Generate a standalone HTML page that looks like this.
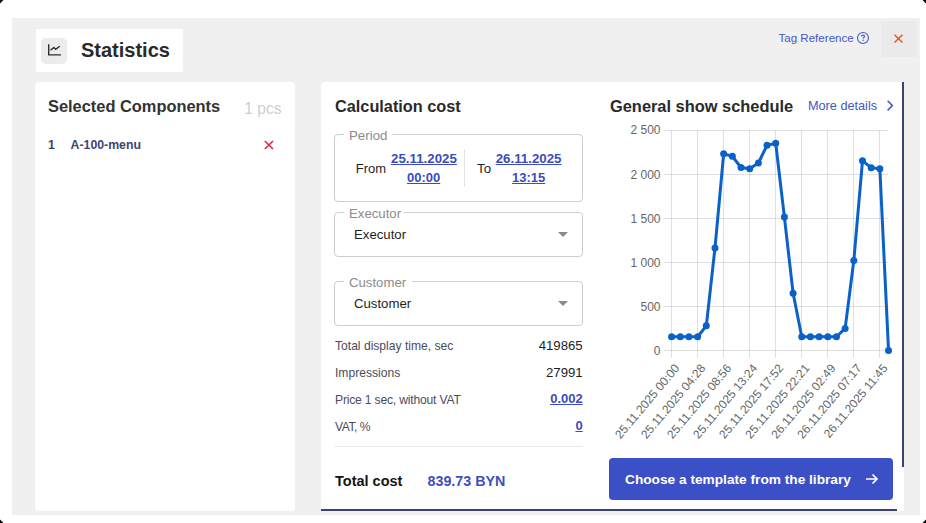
<!DOCTYPE html>
<html><head><meta charset="utf-8"><style>
html,body{margin:0;padding:0;width:926px;height:523px;overflow:hidden;background:#fff;font-family:"Liberation Sans",sans-serif;position:relative}
.abs{position:absolute}
.t{position:absolute;white-space:nowrap}
.corner{position:absolute;width:0;height:0;border-style:solid}
</style></head><body>
<svg class="abs" style="left:0;top:0" width="926" height="523" viewBox="0 0 926 523"><path d="M0 0H3.5L0 3.5Z" fill="#000"/><path d="M926 0H922.5L926 3.5Z" fill="#000"/><path d="M0 523H3.5L0 519.5Z" fill="#000"/><path d="M926 523H922.5L926 519.5Z" fill="#000"/></svg><div class="abs" style="left:12px;top:18px;width:908px;height:497px;background:#f0f0f0"></div><div class="abs" style="left:36px;top:29px;width:147px;height:43px;background:#fff"></div><div class="abs" style="left:41px;top:38px;width:26px;height:26px;background:#ececec;border-radius:5px"></div><svg class="abs" style="left:41px;top:38px" width="26" height="26" viewBox="0 0 26 26"><path d="M7.7 6.2V16.9H20" fill="none" stroke="#2e2e2e" stroke-width="1.4"/><path d="M9.5 12.3L12.9 9.5L14.7 11.4L18.7 8.3" fill="none" stroke="#2e2e2e" stroke-width="1.4"/></svg><div class="t" style="left:81px;top:40.37px;font-size:20px;line-height:20px;font-weight:700;color:#2a2a2a;">Statistics</div>
<div class="t" style="left:778.4px;top:32.38px;font-size:11.6px;line-height:11.6px;font-weight:400;color:#4657c4;">Tag Reference</div>
<svg class="abs" style="left:856px;top:30.8px" width="14" height="14" viewBox="0 0 14 14"><circle cx="7" cy="7" r="5.5" fill="none" stroke="#4657c4" stroke-width="1.1"/><path d="M5.5 5.6C5.5 4.7 6.2 4.2 7 4.2C7.8 4.2 8.5 4.7 8.5 5.4C8.5 6.3 7.1 6.5 7.1 7.6" fill="none" stroke="#4657c4" stroke-width="1.2"/><circle cx="7.1" cy="9.2" r="0.75" fill="#4657c4"/></svg><div class="abs" style="left:881px;top:21px;width:36px;height:35.5px;background:#eaeaea"></div><svg class="abs" style="left:889px;top:29px" width="20" height="20" viewBox="0 0 20 20"><path d="M5.5 5.8L13.5 13.5M13.5 5.8L5.5 13.5" stroke="#d9552c" stroke-width="1.4" fill="none"/></svg><div class="abs" style="left:35px;top:82px;width:260px;height:429px;background:#fff;border-radius:4px"></div><div class="t" style="left:48px;top:98.12px;font-size:16.4px;line-height:16.4px;font-weight:700;color:#333;">Selected Components</div>
<div class="t" style="right:644.5px;top:100.79px;font-size:15.6px;line-height:15.6px;font-weight:400;color:#cfcfcf;text-align:right;">1 pcs</div>
<div class="t" style="left:48px;top:138.59px;font-size:12.3px;line-height:12.3px;font-weight:700;color:#3d4572;">1</div>
<div class="t" style="left:70.6px;top:138.59px;font-size:12.3px;line-height:12.3px;font-weight:700;color:#3d4572;">A-100-menu</div>
<svg class="abs" style="left:260px;top:137px" width="18" height="16" viewBox="0 0 18 16"><path d="M4.8 4L13 12M13 4L4.8 12" stroke="#e0283a" stroke-width="1.6" fill="none"/></svg><div class="abs" style="left:321px;top:82px;width:583px;height:429px;background:#fff;border-radius:4px 0 0 0"></div><div class="t" style="left:335px;top:97.90px;font-size:16.3px;line-height:16.3px;font-weight:700;color:#2a2a2a;">Calculation cost</div>
<div class="abs" style="left:334px;top:134px;width:249px;height:67.5px;border:1px solid #cdcdcd;border-radius:4px;box-sizing:border-box"></div><div class="abs" style="left:344px;top:132px;width:48px;height:4px;background:#fff"></div><div class="t" style="left:349px;top:128.74px;font-size:13.3px;line-height:13.3px;font-weight:400;color:#8b8b8b;">Period</div>
<div class="t" style="left:355.7px;top:162.00px;font-size:13px;line-height:13px;font-weight:400;color:#1e1e1e;">From</div>
<div class="t" style="left:391px;top:151.54px;font-size:13.3px;line-height:13.3px;font-weight:700;color:#3b4cc0;text-decoration:underline;">25.11.2025</div>
<div class="t" style="left:407px;top:170.60px;font-size:13px;line-height:13px;font-weight:700;color:#3b4cc0;text-decoration:underline;">00:00</div>
<div class="abs" style="left:464px;top:149px;width:1px;height:38px;background:#e3e3e3"></div><div class="t" style="left:477px;top:161.74px;font-size:13.3px;line-height:13.3px;font-weight:400;color:#1e1e1e;">To</div>
<div class="t" style="left:495.7px;top:151.54px;font-size:13.3px;line-height:13.3px;font-weight:700;color:#3b4cc0;text-decoration:underline;">26.11.2025</div>
<div class="t" style="left:512px;top:170.60px;font-size:13px;line-height:13px;font-weight:700;color:#3b4cc0;text-decoration:underline;">13:15</div>
<div class="abs" style="left:334px;top:212px;width:249px;height:44.5px;border:1px solid #cdcdcd;border-radius:4px;box-sizing:border-box"></div><div class="abs" style="left:344px;top:210px;width:60px;height:4px;background:#fff"></div><div class="t" style="left:349px;top:206.83px;font-size:13.2px;line-height:13.2px;font-weight:400;color:#8b8b8b;">Executor</div>
<div class="t" style="left:354px;top:227.53px;font-size:13.2px;line-height:13.2px;font-weight:400;color:#1e1e1e;">Executor</div>
<svg class="abs" style="left:556px;top:230px" width="14" height="10" viewBox="0 0 14 10"><path d="M2 2H12L7 7Z" fill="#8a8a8a"/></svg><div class="abs" style="left:334px;top:281px;width:249px;height:44.5px;border:1px solid #cdcdcd;border-radius:4px;box-sizing:border-box"></div><div class="abs" style="left:344px;top:279px;width:68px;height:4px;background:#fff"></div><div class="t" style="left:349px;top:276.33px;font-size:13.2px;line-height:13.2px;font-weight:400;color:#8b8b8b;">Customer</div>
<div class="t" style="left:354px;top:296.73px;font-size:13.2px;line-height:13.2px;font-weight:400;color:#1e1e1e;">Customer</div>
<svg class="abs" style="left:556px;top:299px" width="14" height="10" viewBox="0 0 14 10"><path d="M2 2H12L7 7Z" fill="#8a8a8a"/></svg><div class="t" style="left:335px;top:340.26px;font-size:12.1px;line-height:12.1px;font-weight:400;color:#4a4d5c;">Total display time, sec</div>
<div class="t" style="right:343.29999999999995px;top:339.33px;font-size:13.2px;line-height:13.2px;font-weight:400;color:#1e1e1e;text-align:right;">419865</div>
<div class="t" style="left:335px;top:366.96px;font-size:12.1px;line-height:12.1px;font-weight:400;color:#4a4d5c;">Impressions</div>
<div class="t" style="right:343.29999999999995px;top:366.03px;font-size:13.2px;line-height:13.2px;font-weight:400;color:#1e1e1e;text-align:right;">27991</div>
<div class="t" style="left:335px;top:393.56px;font-size:12.1px;line-height:12.1px;font-weight:400;color:#4a4d5c;letter-spacing:-0.18px;">Price 1 sec, without VAT</div>
<div class="t" style="right:343.29999999999995px;top:391.80px;font-size:13px;line-height:13px;font-weight:700;color:#3b4cc0;text-decoration:underline;text-align:right;">0.002</div>
<div class="t" style="left:335px;top:420.56px;font-size:12.1px;line-height:12.1px;font-weight:400;color:#4a4d5c;letter-spacing:-0.45px;">VAT, %</div>
<div class="t" style="right:343.29999999999995px;top:418.80px;font-size:13px;line-height:13px;font-weight:700;color:#3b4cc0;text-decoration:underline;text-align:right;">0</div>
<div class="abs" style="left:334px;top:446px;width:249px;height:1px;background:#e9e9e9"></div><div class="t" style="left:335px;top:474.13px;font-size:14.5px;line-height:14.5px;font-weight:700;color:#151515;">Total cost</div>
<div class="t" style="left:427.5px;top:474.30px;font-size:14.3px;line-height:14.3px;font-weight:700;color:#3d4fc0;">839.73 BYN</div>
<div class="t" style="left:610px;top:97.92px;font-size:16.4px;line-height:16.4px;font-weight:700;color:#2a2a2a;">General show schedule</div>
<div class="t" style="left:808px;top:100.05px;font-size:12.7px;line-height:12.7px;font-weight:400;color:#4657c4;">More details</div>
<svg class="abs" style="left:884px;top:98px" width="12" height="15" viewBox="0 0 12 15"><path d="M3.6 2.8L8.4 7.6L3.6 12.4" fill="none" stroke="#4657c4" stroke-width="1.5"/></svg><svg class="abs" style="left:0;top:0" width="926" height="523" viewBox="0 0 926 523">
<line x1="663.5" y1="350.5" x2="888.6" y2="350.5" stroke="rgba(0,0,0,0.12)" stroke-width="1"/>
<text x="660.5" y="354.7" text-anchor="end" font-size="12" fill="#666" font-family="Liberation Sans">0</text>
<line x1="663.5" y1="306.5" x2="888.6" y2="306.5" stroke="rgba(0,0,0,0.12)" stroke-width="1"/>
<text x="660.5" y="310.6" text-anchor="end" font-size="12" fill="#666" font-family="Liberation Sans">500</text>
<line x1="663.5" y1="262.5" x2="888.6" y2="262.5" stroke="rgba(0,0,0,0.12)" stroke-width="1"/>
<text x="660.5" y="266.6" text-anchor="end" font-size="12" fill="#666" font-family="Liberation Sans">1 000</text>
<line x1="663.5" y1="218.5" x2="888.6" y2="218.5" stroke="rgba(0,0,0,0.12)" stroke-width="1"/>
<text x="660.5" y="222.6" text-anchor="end" font-size="12" fill="#666" font-family="Liberation Sans">1 500</text>
<line x1="663.5" y1="174.5" x2="888.6" y2="174.5" stroke="rgba(0,0,0,0.12)" stroke-width="1"/>
<text x="660.5" y="178.5" text-anchor="end" font-size="12" fill="#666" font-family="Liberation Sans">2 000</text>
<line x1="663.5" y1="130.5" x2="888.6" y2="130.5" stroke="rgba(0,0,0,0.12)" stroke-width="1"/>
<text x="660.5" y="134.4" text-anchor="end" font-size="12" fill="#666" font-family="Liberation Sans">2 500</text>
<line x1="671.5" y1="130.3" x2="671.5" y2="358" stroke="rgba(0,0,0,0.12)" stroke-width="1"/>
<line x1="697.5" y1="130.3" x2="697.5" y2="358" stroke="rgba(0,0,0,0.12)" stroke-width="1"/>
<line x1="723.5" y1="130.3" x2="723.5" y2="358" stroke="rgba(0,0,0,0.12)" stroke-width="1"/>
<line x1="749.5" y1="130.3" x2="749.5" y2="358" stroke="rgba(0,0,0,0.12)" stroke-width="1"/>
<line x1="775.5" y1="130.3" x2="775.5" y2="358" stroke="rgba(0,0,0,0.12)" stroke-width="1"/>
<line x1="801.5" y1="130.3" x2="801.5" y2="358" stroke="rgba(0,0,0,0.12)" stroke-width="1"/>
<line x1="827.5" y1="130.3" x2="827.5" y2="358" stroke="rgba(0,0,0,0.12)" stroke-width="1"/>
<line x1="853.5" y1="130.3" x2="853.5" y2="358" stroke="rgba(0,0,0,0.12)" stroke-width="1"/>
<line x1="879.5" y1="130.3" x2="879.5" y2="358" stroke="rgba(0,0,0,0.12)" stroke-width="1"/>
<text transform="translate(680.0,368.5) rotate(-50)" text-anchor="end" font-size="12" fill="#666" font-family="Liberation Sans">25.11.2025 00:00</text>
<text transform="translate(706.0,368.5) rotate(-50)" text-anchor="end" font-size="12" fill="#666" font-family="Liberation Sans">25.11.2025 04:28</text>
<text transform="translate(732.1,368.5) rotate(-50)" text-anchor="end" font-size="12" fill="#666" font-family="Liberation Sans">25.11.2025 08:56</text>
<text transform="translate(758.1,368.5) rotate(-50)" text-anchor="end" font-size="12" fill="#666" font-family="Liberation Sans">25.11.2025 13:24</text>
<text transform="translate(784.1,368.5) rotate(-50)" text-anchor="end" font-size="12" fill="#666" font-family="Liberation Sans">25.11.2025 17:52</text>
<text transform="translate(810.2,368.5) rotate(-50)" text-anchor="end" font-size="12" fill="#666" font-family="Liberation Sans">25.11.2025 22:21</text>
<text transform="translate(836.2,368.5) rotate(-50)" text-anchor="end" font-size="12" fill="#666" font-family="Liberation Sans">26.11.2025 02:49</text>
<text transform="translate(862.2,368.5) rotate(-50)" text-anchor="end" font-size="12" fill="#666" font-family="Liberation Sans">26.11.2025 07:17</text>
<text transform="translate(888.2,368.5) rotate(-50)" text-anchor="end" font-size="12" fill="#666" font-family="Liberation Sans">26.11.2025 11:45</text>
<polyline points="671.60,336.74 680.28,336.74 688.95,336.74 697.63,336.74 706.31,325.82 714.99,247.94 723.66,153.85 732.34,156.32 741.02,167.50 749.69,168.74 758.37,163.01 767.05,145.30 775.72,143.36 784.40,217.10 793.08,293.13 801.75,336.74 810.43,336.74 819.11,336.74 827.79,336.74 836.46,336.74 845.14,328.38 853.82,260.54 862.49,160.81 871.17,167.68 879.85,168.83 888.52,350.40" fill="none" stroke="#0a62c8" stroke-width="3" stroke-linejoin="miter"/>
<circle cx="671.60" cy="336.74" r="3.5" fill="#0a62c8"/>
<circle cx="680.28" cy="336.74" r="3.5" fill="#0a62c8"/>
<circle cx="688.95" cy="336.74" r="3.5" fill="#0a62c8"/>
<circle cx="697.63" cy="336.74" r="3.5" fill="#0a62c8"/>
<circle cx="706.31" cy="325.82" r="3.5" fill="#0a62c8"/>
<circle cx="714.99" cy="247.94" r="3.5" fill="#0a62c8"/>
<circle cx="723.66" cy="153.85" r="3.5" fill="#0a62c8"/>
<circle cx="732.34" cy="156.32" r="3.5" fill="#0a62c8"/>
<circle cx="741.02" cy="167.50" r="3.5" fill="#0a62c8"/>
<circle cx="749.69" cy="168.74" r="3.5" fill="#0a62c8"/>
<circle cx="758.37" cy="163.01" r="3.5" fill="#0a62c8"/>
<circle cx="767.05" cy="145.30" r="3.5" fill="#0a62c8"/>
<circle cx="775.72" cy="143.36" r="3.5" fill="#0a62c8"/>
<circle cx="784.40" cy="217.10" r="3.5" fill="#0a62c8"/>
<circle cx="793.08" cy="293.13" r="3.5" fill="#0a62c8"/>
<circle cx="801.75" cy="336.74" r="3.5" fill="#0a62c8"/>
<circle cx="810.43" cy="336.74" r="3.5" fill="#0a62c8"/>
<circle cx="819.11" cy="336.74" r="3.5" fill="#0a62c8"/>
<circle cx="827.79" cy="336.74" r="3.5" fill="#0a62c8"/>
<circle cx="836.46" cy="336.74" r="3.5" fill="#0a62c8"/>
<circle cx="845.14" cy="328.38" r="3.5" fill="#0a62c8"/>
<circle cx="853.82" cy="260.54" r="3.5" fill="#0a62c8"/>
<circle cx="862.49" cy="160.81" r="3.5" fill="#0a62c8"/>
<circle cx="871.17" cy="167.68" r="3.5" fill="#0a62c8"/>
<circle cx="879.85" cy="168.83" r="3.5" fill="#0a62c8"/>
<circle cx="888.52" cy="350.40" r="3.5" fill="#0a62c8"/>
</svg><div class="abs" style="left:609px;top:458px;width:284px;height:41.5px;background:#3b50c6;border-radius:4px"></div><div class="t" style="left:625px;top:472.60px;font-size:13.7px;line-height:13.7px;font-weight:700;color:#fff;">Choose a template from the library</div>
<svg class="abs" style="left:862px;top:471px" width="18" height="16" viewBox="0 0 18 16"><path d="M4 8H15M10.5 3.5L15 8L10.5 12.5" fill="none" stroke="#fff" stroke-width="1.7"/></svg><div class="abs" style="left:902px;top:82px;width:2px;height:385px;background:#3b4373"></div><div class="abs" style="left:321px;top:509px;width:576px;height:2px;background:#3b4373"></div>
</body></html>
